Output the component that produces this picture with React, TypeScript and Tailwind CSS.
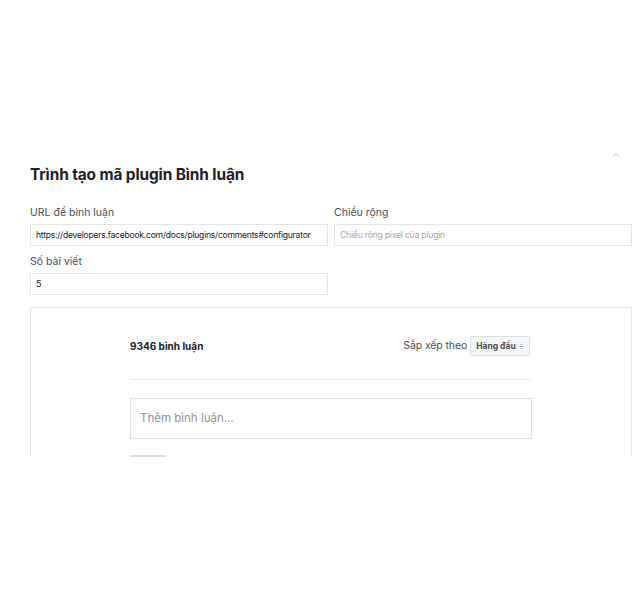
import { ChevronUp } from "lucide-react"

export default function App() {
  return (
    <div className="w-[640px] h-[590px] bg-white font-['Inter',_'Liberation_Sans',_sans-serif] text-[#1d2129]">
      <div className="h-[457px] overflow-hidden pl-[30px] pr-[8px] pt-[148px]">
        <div className="flex items-start justify-between">
          <h1 className="mt-[17px] text-[15.4px] leading-[20px] font-bold tracking-[-0.1px]">
            Trình tạo mã plugin Bình luận
          </h1>
          <ChevronUp className="mr-[10px] mt-[1px] h-[12px] w-[12px] text-[#a9adb3]" strokeWidth={1.5} />
        </div>

        <div className="mt-[20px] grid w-[602px] grid-cols-2 gap-x-[6px]">
          <Field label="URL để bình luận">
            <div className="flex h-[22px] items-center border border-[#e3e5e8] px-[5px] text-[8.6px] tracking-[-0.25px] text-[#1d2129] whitespace-nowrap overflow-hidden">
              https://developers.facebook.com/docs/plugins/comments#configurator
            </div>
          </Field>
          <Field label="Chiều rộng">
            <div className="flex h-[22px] items-center border border-[#e3e5e8] px-[5px] text-[8.6px] tracking-[-0.2px] text-[#a3a7ad]">
              Chiều rộng pixel của plugin
            </div>
          </Field>
          <div className="mt-[8px]">
            <Field label="Số bài viết">
              <div className="flex h-[22px] items-center border border-[#e3e5e8] px-[5px] text-[9px] text-[#1d2129]">
                5
              </div>
            </Field>
          </div>
        </div>

        <div className="mt-[12px] h-[200px] w-[602px] border border-[#e5e6e9] pt-[28px]">
          <div className="mx-auto w-[402px]">
            <div className="flex items-center justify-between">
              <span className="text-[10px] font-bold">9346 bình luận</span>
              <div className="flex items-center gap-[3px]">
                <span className="text-[10.5px] tracking-[-0.1px] text-[#4b4f56]">Sắp xếp theo</span>
                <div className="mr-[2px] flex h-[20px] items-center gap-[3px] rounded-[2px] border border-[#dddfe2] bg-[#f5f6f7] px-[5px] text-[8.5px] font-bold text-[#4b4f56]">
                  Hàng đầu
                  <span className="text-[8px] font-normal text-[#90949c]">÷</span>
                </div>
              </div>
            </div>
            <div className="mt-[23px] h-px bg-[#e9ebee]" />
            <div className="mt-[18px] flex h-[41px] items-center border border-[#dddfe2] px-[9px] text-[11.5px] text-[#90949c]">
              Thêm bình luận...
            </div>
            <div className="mt-[16px] h-[10px] w-[36px] rounded-[2px] border-t-2 border-[#d6dcea] bg-[#f5f6f7]" />
          </div>
        </div>
      </div>
    </div>
  )
}

function Field({ label, children }: { label: string; children: React.ReactNode }) {
  return (
    <div>
      <div className="mb-[3px] text-[10.5px] leading-[16px] text-[#4b4f56]">{label}</div>
      {children}
    </div>
  )
}
